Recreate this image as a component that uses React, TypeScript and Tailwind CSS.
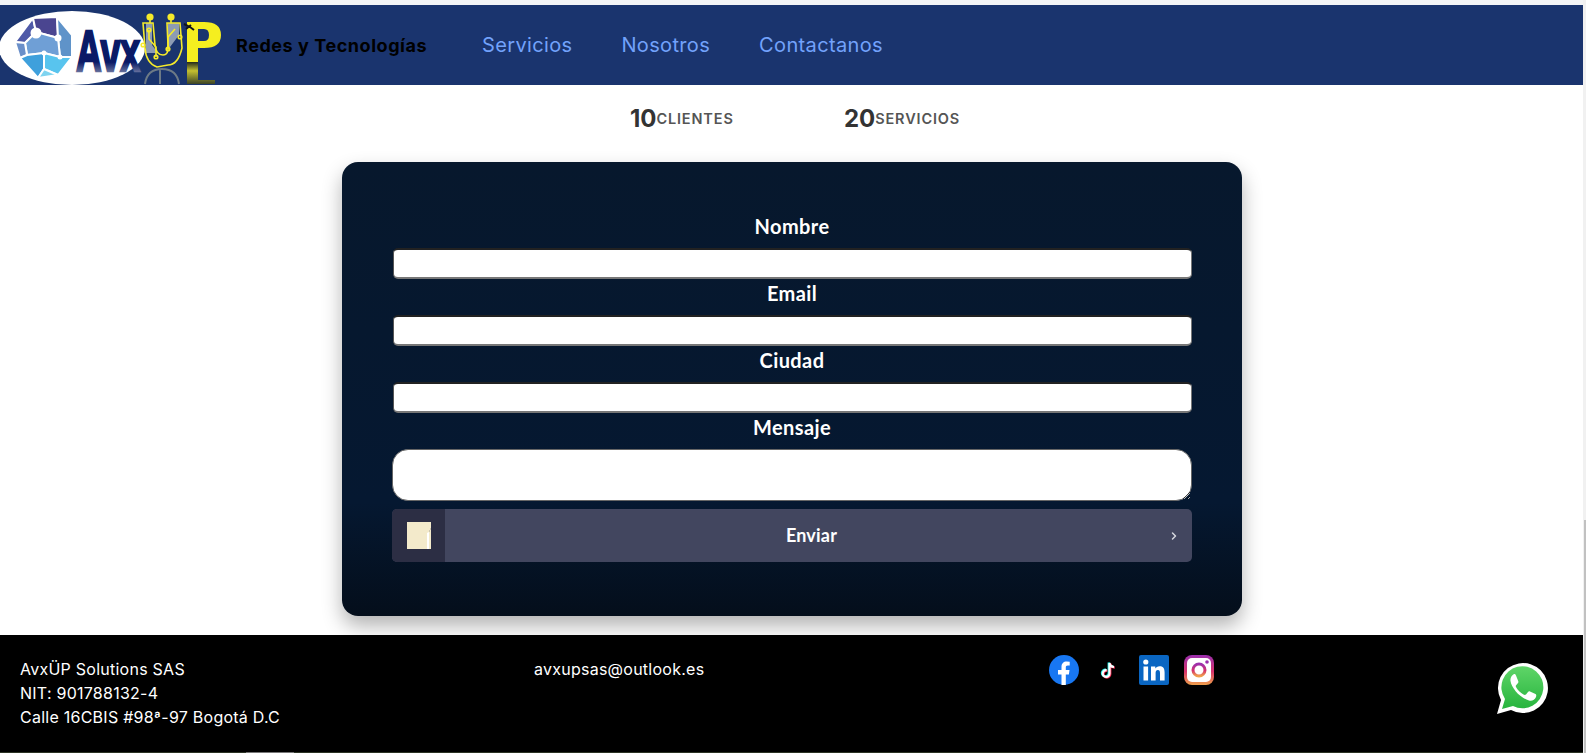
import { ChevronRight } from 'lucide-react'

const body = 'font-["Inter","Liberation_Sans",sans-serif]'
const label = 'block h-[36px] pb-[8px] text-center text-[20px] leading-[28px] tracking-[0.4px] text-white font-["Lato","Noto_Sans",sans-serif] font-bold'
const input = 'block w-[799px] ml-[1px] h-[31px] bg-white rounded-[5px] border-t-2 border-l border-r border-b-2 border-t-[#222] border-l-[#555] border-r-[#777] border-b-[#777]'

function Logo() {
  return (
    <svg width="222" height="80" viewBox="0 0 222 80" className="shrink-0">
      <defs>
        <linearGradient id="avx" x1="0" y1="0" x2="0" y2="1">
          <stop offset="0" stopColor="#0a1a66" />
          <stop offset="0.68" stopColor="#0a1a66" />
          <stop offset="1" stopColor="#c9ced8" />
        </linearGradient>
        <linearGradient id="stem" x1="0" y1="0" x2="0" y2="1">
          <stop offset="0" stopColor="#22281c" />
          <stop offset="0.4" stopColor="#c4c030" />
          <stop offset="1" stopColor="#3c4426" />
        </linearGradient>
      </defs>
      <ellipse cx="72" cy="43" rx="73" ry="37" fill="#fff" />
      <g stroke="#fff" strokeWidth="2" strokeLinejoin="round">
        <polygon points="15,37 33,13 36,27 25,38" fill="#4f5aa8" />
        <polygon points="33,13 57,12 58,33 36,27" fill="#4a4590" />
        <polygon points="57,12 72,30 72,52 60,52 58,33" fill="#5f93c9" />
        <polygon points="36,27 58,33 60,52 44,48 27,50 25,38" fill="#6f9fd6" />
        <polygon points="15,37 25,38 27,50 20,53" fill="#6a8fc9" />
        <polygon points="20,53 27,50 44,48 44,64 38,73" fill="#3fa0dc" />
        <polygon points="44,48 60,52 72,52 58,70 44,64" fill="#58c4ee" />
        <polygon points="44,64 58,70 38,73" fill="#7fd4f0" />
      </g>
      <circle cx="36" cy="28" r="5.5" fill="#fff" />
      <circle cx="58" cy="33" r="3.5" fill="#fff" />
      <circle cx="44" cy="48" r="2.5" fill="#fff" />
      <circle cx="60" cy="52" r="2.5" fill="#fff" />
      <text x="76" y="66" fill="url(#avx)" stroke="url(#avx)" strokeWidth="2.4" fontFamily="Liberation Sans" fontWeight="700" fontSize="58" textLength="64" lengthAdjust="spacingAndGlyphs">Avx</text>
      <path d="M146 18 H152 V40 L158 48 H146 Z M168 18 H179 V30 L170 42 H168 Z" fill="#8d9bb3" />
      <g stroke="#f5ea2a" strokeWidth="1.6" fill="none">
        <path d="M143 18 H153 L155 40 Q156 50 163 50 Q169 50 168 40 L167 18 H180 L182 43 Q178 60 168 60 L157 62 Q146 58 145 43 Z" />
        <path d="M149 25 V34 L156 42 V52 M175 24 L168 32 V44 M150 12 V18 M171 12 V18" />
        <circle cx="149" cy="25" r="1.8" />
        <circle cx="180" cy="32" r="1.8" />
        <circle cx="168" cy="44" r="1.8" />
        <circle cx="156" cy="52" r="1.8" />
        <circle cx="143" cy="40" r="1.8" />
      </g>
      <circle cx="150" cy="12" r="3.6" fill="#f5ea2a" />
      <circle cx="171" cy="12" r="3.6" fill="#f5ea2a" />
      <path d="M187 17 H204 Q221 17 221 30 Q221 43 204 43 H198 V57 H187 Z M198 24 V36 H204 Q209 36 209 30 Q209 24 204 24 Z" fill="#f5ee1f" fillRule="evenodd" />
      <path d="M187 57 H198 V75 H215 V79 H187 Z" fill="url(#stem)" />
      <path d="M184 19 L190 22 L194 25 M186 24 L191 20" stroke="#10141c" strokeWidth="2" fill="none" />
      <path d="M145 79 Q147 64 162 64 Q177 64 179 79 M160 64 V79" stroke="#6d7a86" strokeWidth="2" fill="none" />
    </svg>
  )
}

function Social() {
  return (
    <div className="flex items-center gap-[15px]">
      <svg width="30" height="30" viewBox="0 0 30 30">
        <circle cx="15" cy="15" r="15" fill="#1877f2" />
        <path d="M12.5 30 V19.5 H9 V15 H12.5 V12 C12.5 8.5 14.5 6.6 17.7 6.6 L20.7 6.8 V10.6 H18.8 C17.2 10.6 16.8 11.5 16.8 12.6 V15 H20.5 L19.9 19.5 H16.8 V30 Z" fill="#fff" />
      </svg>
      <svg width="30" height="30" viewBox="0 0 30 30">
        <path d="M15.5 8 V18.5 A3.4 3.4 0 1 1 12.6 15.2 M15.5 8 Q16 11.6 20 12" stroke="#25f4ee" strokeWidth="2.2" fill="none" transform="translate(-0.8 -0.6)" />
        <path d="M15.5 8 V18.5 A3.4 3.4 0 1 1 12.6 15.2 M15.5 8 Q16 11.6 20 12" stroke="#fe2c55" strokeWidth="2.2" fill="none" transform="translate(0.8 0.6)" />
        <path d="M15.5 8 V18.5 A3.4 3.4 0 1 1 12.6 15.2 M15.5 8 Q16 11.6 20 12" stroke="#fff" strokeWidth="2.2" fill="none" />
      </svg>
      <svg width="30" height="30" viewBox="0 0 30 30">
        <rect width="30" height="30" rx="2" fill="#0a66c2" />
        <rect x="4.5" y="11.5" width="4.6" height="14" fill="#fff" />
        <circle cx="6.8" cy="7" r="2.6" fill="#fff" />
        <path d="M12 11.5 H16.3 V13.5 C17 12.2 18.5 11.2 20.6 11.2 C24.7 11.2 25.6 13.8 25.6 17.4 V25.5 H21 V18.3 C21 16.7 20.8 15 18.9 15 C17 15 16.6 16.5 16.6 18.2 V25.5 H12 Z" fill="#fff" />
      </svg>
      <svg width="30" height="30" viewBox="0 0 30 30">
        <defs>
          <linearGradient id="ig" x1="0" y1="0" x2="0" y2="1">
            <stop offset="0" stopColor="#9b2fae" />
            <stop offset="0.55" stopColor="#d6336c" />
            <stop offset="1" stopColor="#f0a04b" />
          </linearGradient>
        </defs>
        <rect width="30" height="30" rx="8" fill="url(#ig)" />
        <rect x="3" y="3" width="24" height="24" rx="5" fill="#fff" />
        <circle cx="15" cy="15" r="6" fill="none" stroke="url(#ig)" strokeWidth="3" />
        <circle cx="23" cy="7" r="1.8" fill="#9b2fae" />
      </svg>
    </div>
  )
}

function WhatsApp() {
  return (
    <svg width="52" height="52" viewBox="0 0 52 52">
      <defs>
        <linearGradient id="wa" x1="0" y1="0" x2="0" y2="1">
          <stop offset="0" stopColor="#5fd568" />
          <stop offset="1" stopColor="#27b43e" />
        </linearGradient>
      </defs>
      <path d="M1 51 L5 37 A25 25 0 1 1 15 47 Z" fill="#fff" />
      <path d="M6 46 L9 36 A21 21 0 1 1 17 43 Z" fill="url(#wa)" />
      <path d="M18 11 C16 12 14 15 14.5 18 C15.5 25 24 35 33 37.5 C36 38.3 39 36.5 40 34 C40.5 32.5 40.3 31.5 39.5 31 L34 28.5 C33 28 32.5 28.5 32 29 L30 31.5 C29 32 28.5 32 27.5 31.5 C24.5 30 21.5 27 20 24 C19.5 23 19.8 22.5 20.3 22 L22 20 C22.5 19.3 22.5 18.8 22.2 18 L20 12.5 C19.6 11.3 19 11 18 11 Z" fill="#fff" />
    </svg>
  )
}

export default function App() {
  return (
    <div className={`relative min-h-[753px] bg-white pt-[5px] pr-[3px] ${body}`}>
      <div className="absolute top-0 left-0 right-0 h-[5px] bg-[#f3f4f6]" />
      <div className="absolute top-0 bottom-0 right-0 w-[3px] bg-[#f1f1f1]">
        <div className="absolute top-[520px] bottom-0 right-0 w-[2px] bg-[#c1c1c1]" />
      </div>

      <nav className="h-[80px] bg-[#1a346e] flex items-center">
        <Logo />
        <span className="ml-[14px] w-[246px] text-[18px] font-bold tracking-[0.55px] text-black">Redes y Tecnologías</span>
        <ul className="flex gap-[49px] text-[20px] tracking-[0.35px] text-[#72a2fb]">
          <li>Servicios</li>
          <li>Nosotros</li>
          <li>Contactanos</li>
        </ul>
      </nav>

      <div className="h-[77px] pb-[10px] pl-[7px] flex items-center justify-center">
        <div className="flex w-[214px] items-center">
          <span className="text-[24px] font-bold text-[#333]">10</span>
          <span className="text-[14.5px] font-semibold tracking-[0.85px] text-[#555]">CLIENTES</span>
        </div>
        <div className="flex items-center">
          <span className="text-[24px] font-bold text-[#333]">20</span>
          <span className="text-[14.5px] font-semibold tracking-[0.85px] text-[#555]">SERVICIOS</span>
        </div>
      </div>

      <form className="ml-[342px] w-[900px] h-[454px] rounded-[16px] bg-gradient-to-b from-[#07182d] via-[#051831] via-75% to-[#040e1b] px-[50px] pt-[50px] shadow-[0_10px_20px_rgba(0,0,0,0.3)]">
        <label className={label}>Nombre</label>
        <input className={input} />
        <label className={label}>Email</label>
        <input className={input} />
        <label className={label}>Ciudad</label>
        <input className={input} />
        <label className={label}>Mensaje</label>
        <textarea className="block w-full h-[52px] bg-white rounded-[16px] border border-[#666]" />
        <button type="button" className="mt-[8px] flex w-full h-[53px] items-center rounded-[5px] bg-[#42465f] text-white overflow-hidden">
          <span className="flex h-full w-[53px] items-center justify-center bg-[#2c2e44] pl-[2px]">
            <svg width="25" height="28" viewBox="0 0 25 28">
              <path d="M0 0 H24 V6 L22 10 V27 H0 Z" fill="#f3eacb" />
              <path d="M20 11 L22 10 V27 H20 Z" fill="#fff" />
              <path d="M22 10 L24 6 V27 H22 Z" fill="#f3eacb" />
            </svg>
          </span>
          <span className={`flex-1 pl-[10px] text-center text-[18px] tracking-[0.2px] font-bold font-["Lato","Noto_Sans",sans-serif]`}>Enviar</span>
          <ChevronRight strokeWidth={3} className="mr-[12px] w-[12px] h-[12px] text-[#d5d6dd]" />
        </button>
      </form>

      <footer className="mt-[19px] h-[117px] bg-black text-white text-[16px] leading-[24px] tracking-[0.25px] pl-[20px] pt-[22px] flex items-start">
        <div className="w-[514px]">
          <p>AvxÜP Solutions SAS</p>
          <p>NIT: 901788132-4</p>
          <p>Calle 16CBIS #98ª-97 Bogotá D.C</p>
        </div>
        <div className="w-[515px]">avxupsas@outlook.es</div>
        <div className="-mt-[2px]">
          <Social />
        </div>
      </footer>
      <div className="h-[1px] bg-[#2b3324] pl-[246px]">
        <div className="h-[1px] w-[48px] bg-[#777]" />
      </div>

      <div className="absolute left-[1496px] top-[663px]">
        <WhatsApp />
      </div>
    </div>
  )
}
